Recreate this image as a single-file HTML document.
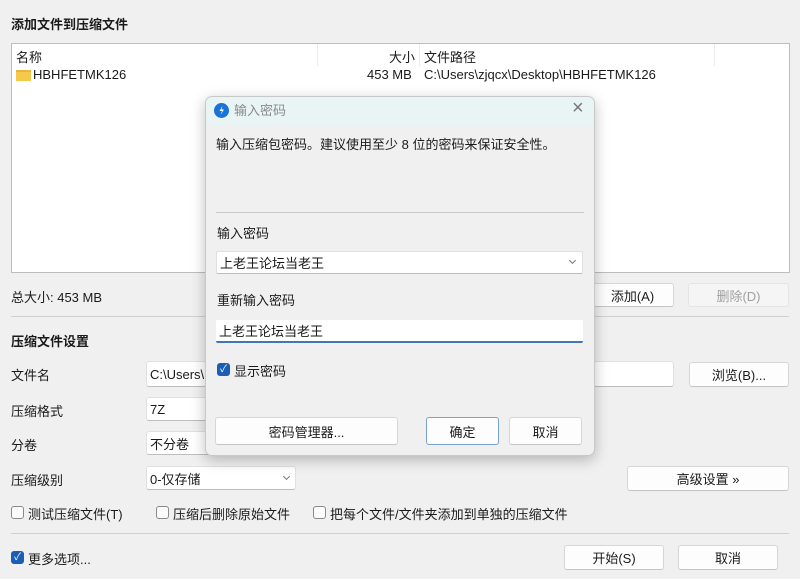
<!DOCTYPE html>
<html><head><meta charset="utf-8"><style>
*{box-sizing:border-box;margin:0;padding:0}
body{width:800px;height:579px;background:#f0f0f0;font-family:"Liberation Sans","Noto Sans CJK SC",sans-serif;font-size:13px;color:#1a1a1a;position:relative;overflow:hidden}
.a{position:absolute;white-space:nowrap}
.b{position:absolute;background:#fdfdfd;border:1px solid #d6d6d6;border-bottom-color:#c4c4c4;border-radius:3px;text-align:center;display:flex;align-items:center;justify-content:center}
.in{position:absolute;background:#fff;border:1px solid #e0e0e0;border-bottom-color:#bdbdbd;border-radius:3px;padding-left:3px;display:flex;align-items:center}
.cb{position:absolute;width:13px;height:13px;border:1px solid #8a8a8a;border-radius:3px;background:#fbfbfb}
.cbc{position:absolute;width:13px;height:13px;border-radius:3px;background:#1b5fb5;color:#fff;font-size:10px;line-height:13px;text-align:center}
.hr{position:absolute;height:1px;background:#cfcfcf}
.chev{position:absolute;width:5px;height:5px;border-right:1px solid #777;border-bottom:1px solid #777;transform:rotate(45deg)}
</style></head><body>
<div class="a" style="left:11px;top:14px;font-weight:bold">添加文件到压缩文件</div>
<div style="position:absolute;left:11px;top:43px;width:779px;height:230px;background:#fff;border:1px solid #bdbdbd"></div>
<div style="position:absolute;left:317px;top:44px;width:1px;height:22px;background:#ececec"></div>
<div style="position:absolute;left:419px;top:44px;width:1px;height:22px;background:#ececec"></div>
<div style="position:absolute;left:714px;top:44px;width:1px;height:22px;background:#ececec"></div>
<div class="a" style="left:16px;top:47px">名称</div>
<div class="a" style="left:389px;top:47px">大小</div>
<div class="a" style="left:424px;top:47px">文件路径</div>
<div style="position:absolute;left:16px;top:70px;width:15px;height:11px;background:#f5c94c;border-top:2px solid #e9b53a"></div>
<div class="a" style="left:33px;top:67px">HBHFETMK126</div>
<div class="a" style="left:367px;top:67px">453 MB</div>
<div class="a" style="left:424px;top:67px">C:\Users\zjqcx\Desktop\HBHFETMK126</div>

<div class="a" style="left:11px;top:287px">总大小: 453 MB</div>
<div class="b" style="left:591px;top:283px;width:83px;height:24px">添加(A)</div>
<div class="b" style="left:688px;top:283px;width:101px;height:24px;color:#a0a0a0;background:#f5f5f5;border-color:#e4e4e4">删除(D)</div>
<div class="hr" style="left:11px;top:316px;width:778px"></div>
<div class="a" style="left:11px;top:331px;font-weight:bold">压缩文件设置</div>
<div class="a" style="left:11px;top:365px">文件名</div>
<div class="in" style="left:146px;top:361px;width:528px;height:26px">C:\Users\</div>
<div class="b" style="left:689px;top:362px;width:100px;height:25px">浏览(B)...</div>
<div class="a" style="left:11px;top:401px">压缩格式</div>
<div class="in" style="left:146px;top:397px;width:150px;height:24px">7Z</div>
<div class="a" style="left:11px;top:435px">分卷</div>
<div class="in" style="left:146px;top:431px;width:150px;height:24px">不分卷</div>
<div class="a" style="left:11px;top:470px">压缩级别</div>
<div class="in" style="left:146px;top:466px;width:150px;height:24px">0-仅存储</div>
<div class="chev" style="left:284px;top:474px"></div>
<div class="b" style="left:627px;top:466px;width:162px;height:25px">高级设置 »</div>
<div class="cb" style="left:11px;top:506px"></div><div class="a" style="left:28px;top:504px">测试压缩文件(T)</div>
<div class="cb" style="left:156px;top:506px"></div><div class="a" style="left:173px;top:504px">压缩后删除原始文件</div>
<div class="cb" style="left:313px;top:506px"></div><div class="a" style="left:330px;top:504px">把每个文件/文件夹添加到单独的压缩文件</div>
<div class="hr" style="left:11px;top:533px;width:778px"></div>
<div class="cbc" style="left:11px;top:551px">✓</div><div class="a" style="left:28px;top:549px">更多选项...</div>
<div class="b" style="left:564px;top:545px;width:100px;height:25px">开始(S)</div>
<div class="b" style="left:678px;top:545px;width:100px;height:25px">取消</div>

<!-- dialog -->
<div style="position:absolute;left:205px;top:96px;width:390px;height:360px;background:#f0f0f0;border:1px solid #c8c8c8;border-radius:7px;box-shadow:0 4px 14px rgba(0,0,0,.25);overflow:hidden">
  <div style="position:absolute;left:0;top:0;width:100%;height:29px;background:#e9f4f5"></div>
  <div style="position:absolute;left:8px;top:6px;width:15px;height:15px;border-radius:50%;background:#1a73d9"></div>
  <svg style="position:absolute;left:8px;top:6px" width="15" height="15" viewBox="0 0 15 15"><path d="M8.5 3 L5.5 8 L8 8 L6.5 12 L10 6.5 L7.5 6.5 Z" fill="#fff"/></svg>
  <div class="a" style="left:28px;top:3px;color:#8a8a8a">输入密码</div>
  <div class="a" style="left:366px;top:0px;font-size:20px;color:#777;font-weight:200">×</div>
  <div class="a" style="left:10px;top:37px">输入压缩包密码。建议使用至少 8 位的密码来保证安全性。</div>
  <div class="hr" style="left:10px;top:115px;width:368px;background:#c9c9c9"></div>
  <div class="a" style="left:11px;top:126px">输入密码</div>
  <div class="in" style="left:10px;top:154px;width:367px;height:23px;border-radius:2px">上老王论坛当老王</div>
  <div class="chev" style="left:364px;top:161px"></div>
  <div class="a" style="left:11px;top:193px">重新输入密码</div>
  <div class="in" style="left:10px;top:223px;width:367px;height:23px;border:none;border-bottom:2px solid #3f78b8;border-radius:2px">上老王论坛当老王</div>
  <div class="cbc" style="left:11px;top:266px">✓</div>
  <div class="a" style="left:28px;top:264px">显示密码</div>
  <div class="b" style="left:9px;top:320px;width:183px;height:28px">密码管理器...</div>
  <div class="b" style="left:220px;top:320px;width:73px;height:28px;border:1px solid #7aa2d0">确定</div>
  <div class="b" style="left:303px;top:320px;width:73px;height:28px">取消</div>
</div>
</body></html>
